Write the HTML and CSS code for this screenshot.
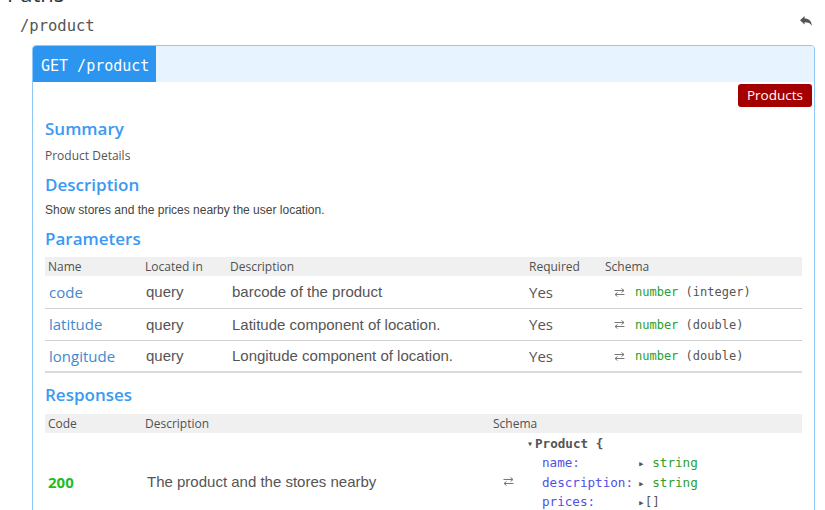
FILE: index.html
```html
<!DOCTYPE html>
<html>
<head>
<meta charset="utf-8">
<link rel="stylesheet" href="styles.css">
</head>
<body>
<h2 class="paths-title">Paths</h2>
<div class="path-row">
  <span class="path-name">/product</span>
  <svg class="back-icon" width="12" height="10" viewBox="0 0 12 10"><path d="M0 4.2 L4.6 0 L4.6 2.6 C8.6 2.6 11.6 5 12 10 C10.4 7.2 8.2 6.2 4.6 6.2 L4.6 8.6 Z" fill="#555"/></svg>
</div>
<div class="card">
  <div class="card-head"><span class="method">GET /product</span></div>
  <div class="card-body">
    <div class="badge-row"><span class="badge">Products</span></div>
    <h3 class="sec-title t-summary">Summary</h3>
    <p class="summary-text">Product Details</p>
    <h3 class="sec-title t-desc">Description</h3>
    <p class="desc-text">Show stores and the prices nearby the user location.</p>
    <h3 class="sec-title t-params">Parameters</h3>
    <table class="tbl params">
      <colgroup><col class="c-name"><col class="c-loc"><col class="c-desc"><col class="c-req"><col class="c-schema"></colgroup>
      <thead><tr><th>Name</th><th>Located in</th><th>Description</th><th>Required</th><th>Schema</th></tr></thead>
      <tbody>
        <tr><td class="pname">code</td><td class="plain loc">query</td><td class="plain pdesc">barcode of the product</td><td class="req">Yes</td><td class="schema"><svg class="swap" width="11" height="9" viewBox="0 0 11 9"><path d="M0.5 2.5 H10 M7.5 0.5 L10 2.5 L7.5 4.5 M10.5 6.5 H1 M3.5 4.5 L1 6.5 L3.5 8.5" stroke="#777" stroke-width="1" fill="none"/></svg><span class="type">number</span><span class="fmt"> (integer)</span></td></tr>
        <tr><td class="pname">latitude</td><td class="plain loc">query</td><td class="plain pdesc">Latitude component of location.</td><td class="req">Yes</td><td class="schema"><svg class="swap" width="11" height="9" viewBox="0 0 11 9"><path d="M0.5 2.5 H10 M7.5 0.5 L10 2.5 L7.5 4.5 M10.5 6.5 H1 M3.5 4.5 L1 6.5 L3.5 8.5" stroke="#777" stroke-width="1" fill="none"/></svg><span class="type">number</span><span class="fmt"> (double)</span></td></tr>
        <tr class="last"><td class="pname">longitude</td><td class="plain loc">query</td><td class="plain pdesc">Longitude component of location.</td><td class="req">Yes</td><td class="schema"><svg class="swap" width="11" height="9" viewBox="0 0 11 9"><path d="M0.5 2.5 H10 M7.5 0.5 L10 2.5 L7.5 4.5 M10.5 6.5 H1 M3.5 4.5 L1 6.5 L3.5 8.5" stroke="#777" stroke-width="1" fill="none"/></svg><span class="type">number</span><span class="fmt"> (double)</span></td></tr>
      </tbody>
    </table>
    <h3 class="sec-title t-resp">Responses</h3>
    <table class="tbl resp">
      <colgroup><col class="r-code"><col class="r-desc"><col class="r-schema"></colgroup>
      <thead><tr><th>Code</th><th>Description</th><th>Schema</th></tr></thead>
      <tbody>
        <tr>
          <td class="code200">200</td>
          <td class="plain rdesc">The product and the stores nearby</td>
          <td class="rschema">
            <div class="schema-wrap">
              <svg class="swap rswap" width="11" height="9" viewBox="0 0 11 9"><path d="M0.5 2.5 H10 M7.5 0.5 L10 2.5 L7.5 4.5 M10.5 6.5 H1 M3.5 4.5 L1 6.5 L3.5 8.5" stroke="#777" stroke-width="1" fill="none"/></svg>
              <div class="tree">
                <div class="tline model"><span class="caret">▾</span>Product {</div>
                <div class="tline prop"><span class="key">name:</span><span class="val"><span class="arr">▸</span> <span class="str">string</span></span></div>
                <div class="tline prop"><span class="key">description:</span><span class="val"><span class="arr">▸</span> <span class="str">string</span></span></div>
                <div class="tline prop"><span class="key">prices:</span><span class="val"><span class="arr">▸</span>[]</span></div>
                <div class="tline model">}</div>
              </div>
            </div>
          </td>
        </tr>
      </tbody>
    </table>
  </div>
</div>
</body>
</html>
```
FILE: styles.css
```css
* { box-sizing: border-box; }
html, body { margin: 0; padding: 0; background: #fff; overflow: hidden; }
body { font-family: "Open Sans", "Liberation Sans", sans-serif; color: #555; }

.paths-title {
  margin: -22px 0 0 7px;
  font-size: 22px;
  line-height: 30px;
  font-weight: 400;
  color: #333;
}

.path-row {
  display: flex;
  justify-content: space-between;
  align-items: center;
  height: 36px;
  margin-bottom: 1px;
  padding: 0 13px 0 20px;
}
.path-name {
  font-family: "DejaVu Sans Mono", monospace;
  font-size: 15.5px;
  color: #555;
}
.back-icon { align-self: flex-start; margin-top: 8px; }

.card {
  margin: 0 10px 0 32px;
  border: 1px solid #8fc7f7;
  border-radius: 4px 4px 0 0;
  overflow: hidden;
}
.card-head {
  display: flex;
  height: 36px;
  background: #e7f3fe;
}
.method {
  background: #2b95f0;
  color: #fff;
  font-family: "DejaVu Sans Mono", monospace;
  font-size: 15px;
  line-height: 36px;
  padding: 2px 7px 0 8px;
}
.card-body { padding: 0 12px 40px 12px; }

.badge-row { display: flex; justify-content: flex-end; margin: 2px -10px 0 0; }
.badge {
  background: #a40000;
  color: #fff;
  font-size: 13.5px;
  line-height: 23px;
  height: 23px;
  padding: 0 9px;
  border-radius: 3px;
}

.sec-title {
  margin: 0;
  font-size: 17px;
  line-height: 23px;
  font-weight: 600;
  color: #3a99f2;
}
.t-summary { margin-top: 10px; }
.t-desc { margin-top: 9px; }
.t-params { margin-top: 9px; }
.t-resp { margin-top: 10px; }

.summary-text {
  margin: 7px 0 0 0;
  font-size: 12px;
  line-height: 17px;
  color: #555;
}
.desc-text {
  margin: 7px 0 0 0;
  font-family: "Liberation Sans", Arial, sans-serif;
  font-size: 12px;
  line-height: 15px;
  color: #444;
}

.tbl {
  width: 100%;
  border-collapse: collapse;
  table-layout: fixed;
  margin-top: 7px;
}
.resp { margin-top: 8px; }
.tbl th {
  background: #f0f0f0;
  height: 19px;
  padding: 0 3px;
  text-align: left;
  font-size: 12px;
  font-weight: 400;
  color: #505050;
  line-height: 19px;
}
.c-name { width: 97px; }
.c-loc { width: 85px; }
.c-desc { width: 299px; }
.c-req { width: 76px; }
.c-schema { width: auto; }
.r-code { width: 97px; }
.r-desc { width: 348px; }
.r-schema { width: auto; }

.params td {
  height: 32px;
  padding: 0 3px;
  border-bottom: 1px solid #cfcfcf;
  font-size: 15px;
  white-space: nowrap;
}
.params tr.last td { border-bottom: 2px solid #dadada; }
.params td.pname { color: #4389cc; padding-left: 4px; }
.plain {
  font-family: "Liberation Sans", Arial, sans-serif;
  color: #555;
}
.params td.loc { padding-left: 4px; }
.params td.pdesc { padding-left: 5px; }
.params td.req { color: #555; padding-left: 3px; }
.params td.schema { padding-left: 12px; font-size: 12px; }
.swap { vertical-align: middle; margin-right: 10px; position: relative; top: -1px; }
.type {
  font-family: "DejaVu Sans Mono", monospace;
  font-size: 12px;
  color: #2ba02b;
}
.fmt {
  font-family: "DejaVu Sans Mono", monospace;
  font-size: 12px;
  color: #555;
  white-space: pre;
}

.resp td { padding: 0 3px; vertical-align: middle; }
.resp td.rdesc { font-size: 15px; padding-left: 5px; }
.code200 {
  font-size: 15px;
  font-weight: 700;
  color: #1fbd1f;
}
.schema-wrap { display: flex; align-items: center; padding-left: 10px; }
.rswap { margin-right: 13px; top: 0; }
.tree {
  font-family: "DejaVu Sans Mono", monospace;
  font-size: 12.6px;
  line-height: 19.3px;
  padding-top: 1px;
}
.tline { white-space: nowrap; height: 19.3px; line-height: 19.3px; }
.model { font-weight: 700; color: #555; }
.caret { font-size: 10px; display: inline-block; width: 8px; line-height: 10px; vertical-align: 1px; }
.prop { padding-left: 15px; display: flex; }
.key { color: #5050e6; width: 96px; }
.arr { font-size: 11px; color: #555; line-height: 10px; }
.str { color: #2e9e2e; }
```
